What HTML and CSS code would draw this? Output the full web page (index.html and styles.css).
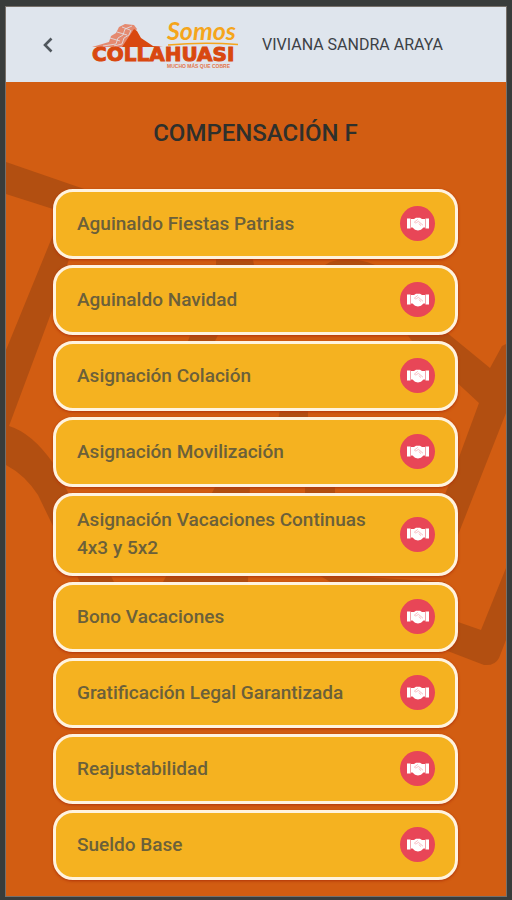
FILE: index.html
```html
<!DOCTYPE html>
<html lang="es">
<head>
<meta charset="utf-8">
<meta name="viewport" content="width=device-width, initial-scale=1">
<title>Compensación F</title>
<link rel="stylesheet" href="styles.css">
</head>
<body>
<svg class="defs" aria-hidden="true">
  <symbol id="handshake" viewBox="0 0 22 14">
    <path fill="#fff" d="M0 1.500h3.500v10H0zM18.500 1.500H22v10h-3.500zM4 2h3l2-1.200h4L15 2h3v8.500h-1.500L14 12.700l-3 .8-3-.8-2.500-2.200H4z"/>
    <path fill="none" stroke="#f3a0a8" stroke-width=".7" stroke-linecap="round" stroke-linejoin="round" d="M10.500 2.600 7.400 5.100q.7 1.300 2.200.5l1.800-1.300 4.200 3.600M12 6.800l1.800 1.600"/>
  </symbol>
</svg>
<div class="app">
  <header class="topbar">
    <button class="back" type="button" aria-label="Volver">
      <svg width="12" height="18" viewBox="0 0 12 18"><path d="M9.500 2.500 3 9l6.500 6.500" fill="none" stroke="#50575d" stroke-width="2.600"/></svg>
    </button>
    <svg class="logo" width="150" height="60" viewBox="0 -6 150 60" role="img" aria-label="Somos Collahuasi">
      <g transform="translate(0 -2)">
        <path fill="#e58a70" d="M2 28l17-5 2-6 5-3 3-6 6-3 9 1 3 4-14 18z"/>
        <path fill="none" stroke="#dfe5eb" stroke-width=".8" d="M13 27l13-2 2-6 5-3 2-6 7-3M24 27l8-2 2-6 5-3 2-5M20 19l10 3M27 13l10 3M32 8l8 3"/>
        <path fill="#d9480f" d="M32 28l12-18 3 2 4 7 6 4 6 4 10 1z"/>
      </g>
      <text class="logo-somos" x="77" y="19">Somos</text>
      <path fill="none" stroke="#f5a51c" stroke-width="1.500" d="M78 24q35-3 70-.5"/>
      <text class="logo-name" x="2" y="40">COLLAHUASI</text>
      <text class="logo-tag" x="77" y="47">MUCHO MÁS QUE COBRE</text>
    </svg>
    <span class="user">VIVIANA SANDRA ARAYA</span>
  </header>
  <main class="content">
    <svg class="pattern" viewBox="6 82 500 814" preserveAspectRatio="none" aria-hidden="true">
      <path d="M6 162 90 191 72 250 53 308 9 426Q32 433 53 463L114 582H80L38 495Q25 475 6 465V350L53 235V209L6 194z"/>
      <path d="M216 255h36l2 10-39 76h-27l28-73zM330 262q20-7 45 3h-50zM281 405h27v20h-31zM219 480h31l-2 102h-85zM305 480h30v20h-30z"/>
      <path d="M400 325 440 327 490 368 502 346 506 344V413L458 535 448 555 430 530 448 487 479 403 412 341z"/>
      <path d="M317 574 445 582 458 622 481 630 506 568V640L499 658Q495 666 484 665L445 650z"/>
    </svg>
    <h1 class="title">COMPENSACIÓN F</h1>
    <ul class="list">
      <li><button class="item" type="button"><span class="label">Aguinaldo Fiestas Patrias</span><span class="badge"><svg><use href="#handshake"/></svg></span></button></li>
      <li><button class="item" type="button"><span class="label">Aguinaldo Navidad</span><span class="badge"><svg><use href="#handshake"/></svg></span></button></li>
      <li><button class="item" type="button"><span class="label">Asignación Colación</span><span class="badge"><svg><use href="#handshake"/></svg></span></button></li>
      <li><button class="item" type="button"><span class="label">Asignación Movilización</span><span class="badge"><svg><use href="#handshake"/></svg></span></button></li>
      <li><button class="item" type="button"><span class="label">Asignación Vacaciones Continuas 4x3 y 5x2</span><span class="badge"><svg><use href="#handshake"/></svg></span></button></li>
      <li><button class="item" type="button"><span class="label">Bono Vacaciones</span><span class="badge"><svg><use href="#handshake"/></svg></span></button></li>
      <li><button class="item" type="button"><span class="label">Gratificación Legal Garantizada</span><span class="badge"><svg><use href="#handshake"/></svg></span></button></li>
      <li><button class="item" type="button"><span class="label">Reajustabilidad</span><span class="badge"><svg><use href="#handshake"/></svg></span></button></li>
      <li><button class="item" type="button"><span class="label">Sueldo Base</span><span class="badge"><svg><use href="#handshake"/></svg></span></button></li>
    </ul>
  </main>
</div>
</body>
</html>
```
FILE: styles.css
```css
* {
  box-sizing: border-box;
}

body {
  margin: 0;
  min-height: 100vh;
  padding: 6px 5px 3px;
  display: flex;
  background: #393c3b;
  font-family: Roboto, "Liberation Sans", sans-serif;
}

.defs {
  position: absolute;
  width: 0;
  height: 0;
}

.app {
  flex: 1;
  display: flex;
  flex-direction: column;
  border: 1px solid #77706a;
}

.topbar {
  display: flex;
  align-items: center;
  height: 75px;
  padding-left: 32px;
  background: #dfe5ed;
}

.back {
  display: flex;
  justify-content: center;
  width: 20px;
  padding: 0;
  border: 0;
  background: none;
}

.logo {
  flex: none;
  margin-left: 32px;
}

.logo-somos {
  font: italic 700 25px Lato, sans-serif;
  fill: #f5a51c;
}

.logo-name {
  font: 700 20px "DejaVu Sans", sans-serif;
  fill: #d9480f;
  stroke: #d9480f;
  stroke-width: 1px;
}

.logo-tag {
  font: 700 5px "Liberation Sans", sans-serif;
  fill: #e2764c;
}

.user {
  margin-left: 22px;
  color: #3c4146;
  font-size: 16px;
  white-space: nowrap;
}

.content {
  position: relative;
  flex: 1;
  padding: 36px 48px 16px 47px;
  background: #d25d12;
}

.pattern {
  position: absolute;
  inset: 0;
  width: 100%;
  height: 100%;
  fill: #b24f11;
}

.title {
  position: relative;
  margin: 0 0 41px;
  color: #2e302c;
  font-size: 24px;
  font-weight: 500;
  line-height: 30px;
  text-align: center;
}

.list {
  position: relative;
  display: flex;
  flex-direction: column;
  gap: 6px;
  margin: 0;
  padding: 0;
  list-style: none;
}

.list li {
  display: flex;
}

.item {
  display: flex;
  align-items: center;
  justify-content: space-between;
  gap: 16px;
  width: 100%;
  min-height: 70px;
  padding: 10px 20px 11px 21px;
  border: 3px solid #fff3df;
  border-radius: 20px;
  background: #f5b220;
  box-shadow: 0 1px 3px #b0340a;
  color: #6b603a;
  font: 500 19px/28px Roboto, "Liberation Sans", sans-serif;
  text-align: left;
}

.badge {
  flex: none;
  display: flex;
  align-items: center;
  justify-content: center;
  width: 35px;
  height: 35px;
  border-radius: 50%;
  background: #e84657;
}

.badge svg {
  width: 22px;
  height: 14px;
}
```
